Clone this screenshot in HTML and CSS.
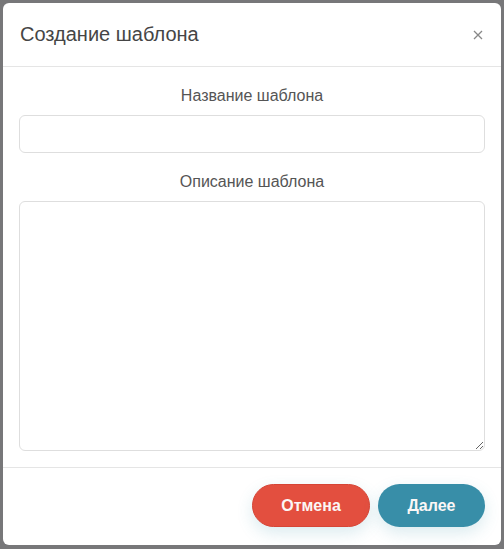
FILE: index.html
```html
<!DOCTYPE html>
<html lang="ru">
<head>
<meta charset="utf-8">
<title>Создание шаблона</title>
<link rel="stylesheet" href="styles.css">
</head>
<body>
<div class="modal">
  <div class="modal-header">
    <h4 class="modal-title">Создание шаблона</h4>
    <button class="close" type="button" aria-label="Закрыть">
      <svg width="10" height="10" viewBox="0 0 10 10"><path d="M1 1L9 9M9 1L1 9" stroke="#888" stroke-width="1.3" fill="none"/></svg>
    </button>
  </div>
  <div class="modal-body">
    <label class="field-label" for="name">Название шаблона</label>
    <input class="field-input" id="name" type="text">
    <label class="field-label second" for="desc">Описание шаблона</label>
    <textarea class="field-textarea" id="desc"></textarea>
  </div>
  <div class="modal-footer">
    <button class="btn btn-cancel" type="button">Отмена</button>
    <button class="btn btn-next" type="button">Далее</button>
  </div>
</div>
</body>
</html>
```
FILE: styles.css
```css
html, body {
  margin: 0;
  padding: 0;
}
body {
  background: #777779;
  font-family: "Liberation Sans", Arial, sans-serif;
  height: 549px;
  overflow: hidden;
}
.modal {
  margin: 3px;
  width: 498px;
  height: 542px;
  background: #fff;
  border-radius: 6px;
  display: flex;
  flex-direction: column;
  box-sizing: border-box;
}
.modal-header {
  height: 63px;
  display: flex;
  align-items: center;
  justify-content: space-between;
  padding: 0 18px 0 17px;
  border-bottom: 1px solid #e5e5e5;
  box-sizing: content-box;
}
.modal-title {
  margin: 0;
  font-size: 20px;
  font-weight: normal;
  color: #454545;
}
.close {
  border: none;
  background: none;
  padding: 0;
  display: flex;
  cursor: pointer;
}
.modal-body {
  padding: 18px 16px 16px;
  display: flex;
  flex-direction: column;
}
.field-label {
  display: block;
  text-align: center;
  font-size: 16px;
  line-height: 22px;
  color: #555;
  margin-bottom: 8px;
}
.field-label.second {
  margin-top: 18px;
}
.field-input,
.field-textarea {
  display: block;
  width: 100%;
  box-sizing: border-box;
  border: 1px solid #dedede;
  border-radius: 6px;
  background: #fff;
  font-family: inherit;
  font-size: 14px;
  outline: none;
}
.field-input {
  height: 38px;
}
.field-textarea {
  height: 250px;
  resize: vertical;
}
.modal-footer {
  border-top: 1px solid #e5e5e5;
  padding: 16px 16px 0;
  display: flex;
  justify-content: flex-end;
  gap: 8px;
}
.btn {
  height: 43px;
  border: none;
  border-radius: 22px;
  color: #fbf7f6;
  font-family: inherit;
  font-size: 16px;
  font-weight: bold;
  box-shadow: 0 6px 16px rgba(56, 142, 168, 0.18);
  cursor: pointer;
}
.btn-cancel {
  width: 118px;
  background: #e34f3f;
  border: 1px solid #d64536;
}
.btn-next {
  width: 107px;
  background: #388ea8;
}
```
